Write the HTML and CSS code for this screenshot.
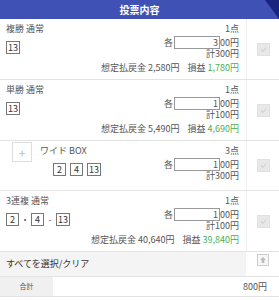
FILE: index.html
```html
<!DOCTYPE html>
<html lang="ja">
<head>
  <meta charset="UTF-8" />
  <meta name="viewport" content="width=device-width, initial-scale=1.0" />
  <title>投票内容</title>
  <link rel="stylesheet" href="styles.css">
</head>
<body>
  <div class="slip">
    <div class="slip-head">投票内容</div>

    <div class="bet">
      <div class="bet-main">
        <div class="bet-top">
          <div class="bet-info">
            <div class="bet-type">複勝 通常</div>
            <div class="nums"><span class="num">13</span></div>
          </div>
          <div class="bet-amount">
            <div class="line">1点</div>
            <div class="each">各<input class="unit" value="3">00円</div>
            <div class="sum">計300円</div>
          </div>
        </div>
        <div class="payout">想定払戻金 2,580円<span class="profit">損益 <em>1,780円</em></span></div>
      </div>
      <div class="bet-check"><span class="check"><svg viewBox="0 0 13 13"><path d="M3.5 6.5 L5.8 8.8 L9.8 4.2" /></svg></span></div>
    </div>

    <div class="bet">
      <div class="bet-main">
        <div class="bet-top">
          <div class="bet-info">
            <div class="bet-type">単勝 通常</div>
            <div class="nums"><span class="num">13</span></div>
          </div>
          <div class="bet-amount">
            <div class="line">1点</div>
            <div class="each">各<input class="unit" value="1">00円</div>
            <div class="sum">計100円</div>
          </div>
        </div>
        <div class="payout">想定払戻金 5,490円<span class="profit">損益 <em>4,690円</em></span></div>
      </div>
      <div class="bet-check"><span class="check"><svg viewBox="0 0 13 13"><path d="M3.5 6.5 L5.8 8.8 L9.8 4.2" /></svg></span></div>
    </div>

    <div class="bet bet-short">
      <div class="bet-main">
        <div class="bet-top">
          <div class="bet-info box-bet">
            <span class="plus">+</span>
            <div>
              <div class="bet-type">ワイド BOX</div>
              <div class="nums box-nums">
                <span class="num">2</span>
                <span class="num">4</span>
                <span class="num">13</span>
              </div>
            </div>
          </div>
          <div class="bet-amount">
            <div class="line">3点</div>
            <div class="each">各<input class="unit" value="1">00円</div>
            <div class="sum">計300円</div>
          </div>
        </div>
      </div>
      <div class="bet-check"><span class="check"><svg viewBox="0 0 13 13"><path d="M3.5 6.5 L5.8 8.8 L9.8 4.2" /></svg></span></div>
    </div>

    <div class="bet">
      <div class="bet-main">
        <div class="bet-top">
          <div class="bet-info">
            <div class="bet-type">3連複 通常</div>
            <div class="nums">
              <span class="num">2</span><span class="sep">・</span><span class="num">4</span><span class="sep">-</span><span class="num">13</span>
            </div>
          </div>
          <div class="bet-amount">
            <div class="line">1点</div>
            <div class="each">各<input class="unit" value="1">00円</div>
            <div class="sum">計100円</div>
          </div>
        </div>
        <div class="payout">想定払戻金 40,640円<span class="profit">損益 <em>39,840円</em></span></div>
      </div>
      <div class="bet-check"><span class="check"><svg viewBox="0 0 13 13"><path d="M3.5 6.5 L5.8 8.8 L9.8 4.2" /></svg></span></div>
    </div>

    <div class="select-all">
      <div class="select-all-btn">すべてを選択/クリア</div>
      <div class="select-all-side">
        <span class="top-btn"><svg viewBox="0 0 10 10"><path d="M5 2 L8 5 L6.3 5 L6.3 8 L3.7 8 L3.7 5 L2 5 Z" /></svg></span>
      </div>
    </div>

    <div class="total-row">
      <div class="total-label">合計</div>
      <div class="total-value">800円</div>
    </div>
  </div>
</body>
</html>
```

FILE: styles.css
```css
body {
  margin: 0;
  font-family: "Noto Sans CJK JP", "Noto Sans", sans-serif;
  font-size: 9px;
  color: #555;
  background: #fff;
}

.slip-head {
  position: relative;
  height: 19px;
  line-height: 19px;
  background: #3f51b5;
  color: #fff;
  font-weight: bold;
  font-size: 10px;
  text-align: center;
  overflow: hidden;
}

/* dark corner */
.slip-head::after {
  content: "";
  position: absolute;
  top: 0;
  right: 0;
  border-top: 19px solid #1a237e;
  border-left: 14px solid transparent;
}

.bet {
  display: flex;
  border-bottom: 1px solid #e3e3e3;
}

.bet-main {
  flex: 1;
  padding: 4px 7px 5px 6px;
}

.bet-short .bet-main {
  padding-bottom: 9px;
}

.bet-top {
  display: flex;
  justify-content: space-between;
}

.bet-type {
  line-height: 12px;
}

.nums {
  display: flex;
  align-items: center;
  margin-top: 6px;
}

.num {
  display: inline-flex;
  align-items: center;
  justify-content: center;
  box-sizing: border-box;
  min-width: 13px;
  height: 13px;
  padding: 0 1px;
  border: 1px solid #777;
  font-size: 9px;
  color: #333;
}

.sep {
  width: 12px;
  text-align: center;
  color: #555;
}

.box-bet {
  display: flex;
}

.plus {
  display: flex;
  align-items: center;
  justify-content: center;
  box-sizing: border-box;
  width: 20px;
  height: 20px;
  margin: -3px 8px 0 6px;
  border: 1px solid #ddd;
  color: #bbb;
  font-size: 12px;
}

.box-nums {
  gap: 4px;
  margin-left: 13px;
}

.bet-amount {
  text-align: right;
}

.line {
  line-height: 12px;
}

.each {
  display: flex;
  align-items: center;
  justify-content: flex-end;
  height: 14px;
}

.unit {
  box-sizing: border-box;
  width: 46px;
  height: 13px;
  margin: 0 0 0 1px;
  padding: 0 1px;
  border: 1px solid #999;
  font: inherit;
  color: #555;
  text-align: right;
}

.sum {
  line-height: 10px;
}

.payout {
  margin-top: 3px;
  line-height: 12px;
  text-align: right;
}

.profit {
  margin-left: 8px;
}

.profit em {
  font-style: normal;
  color: #4caf50;
}

.bet-check {
  box-sizing: border-box;
  width: 33px;
  border-left: 1px solid #f0f0f0;
  display: flex;
  align-items: center;
  justify-content: center;
}

.check {
  display: block;
  box-sizing: border-box;
  width: 13px;
  height: 13px;
  background: #e8e8e8;
  border: 1px solid #e0e0e0;
}

.check svg {
  display: block;
  width: 11px;
  height: 11px;
}

.check path {
  fill: none;
  stroke: #d2d2d2;
  stroke-width: 1.4;
}

.select-all {
  display: flex;
  height: 24px;
  border-bottom: 1px solid #e3e3e3;
}

.select-all-btn {
  flex: 1;
  padding-left: 6px;
  line-height: 24px;
  background: #f4f4f4;
  color: #333;
}

.select-all-side {
  width: 33px;
  display: flex;
  justify-content: center;
  padding-top: 2px;
}

.top-btn {
  display: block;
  box-sizing: border-box;
  width: 12px;
  height: 12px;
  border: 1px solid #ccc;
  background: #f6f6f6;
}

.top-btn svg {
  display: block;
  width: 10px;
  height: 10px;
}

.top-btn path {
  fill: #bbb;
}

.total-row {
  display: flex;
  height: 19px;
  border-bottom: 1px solid #e3e3e3;
}

.total-label {
  width: 53px;
  background: #f0f0f0;
  font-size: 7px;
  line-height: 19px;
  text-align: center;
}

.total-value {
  flex: 1;
  padding-right: 12px;
  line-height: 19px;
  text-align: right;
}
```
